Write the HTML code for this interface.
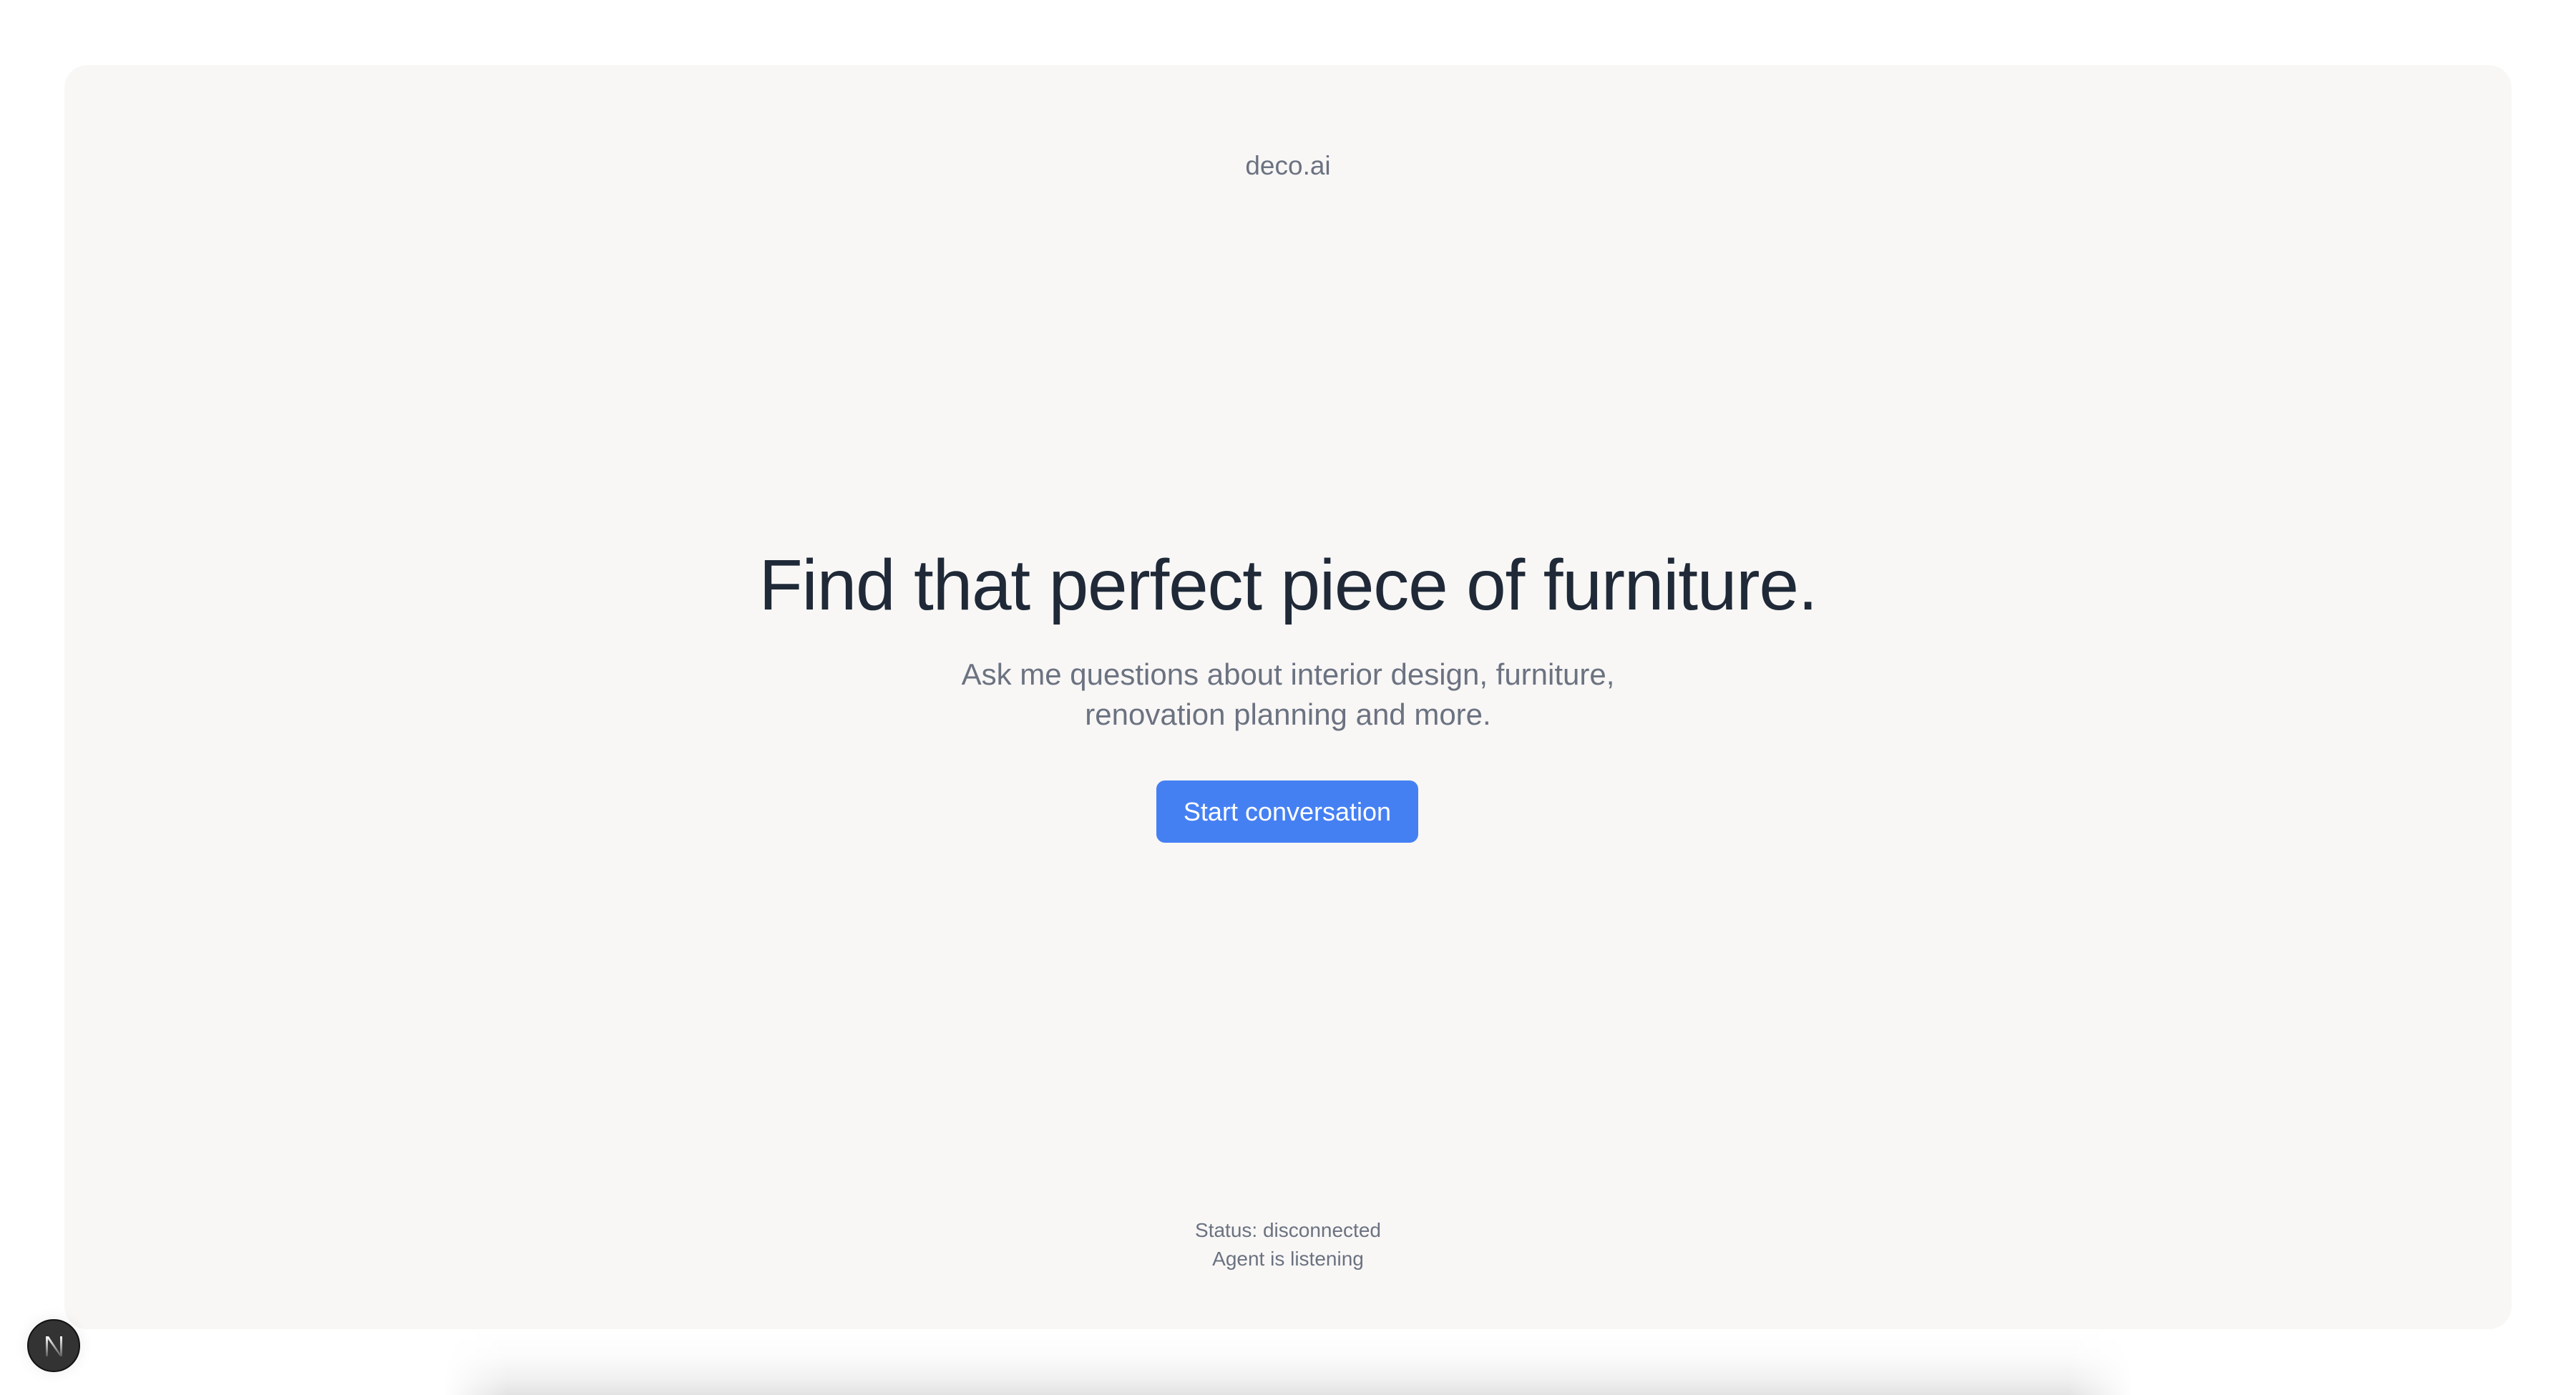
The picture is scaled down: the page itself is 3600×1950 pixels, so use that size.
<!DOCTYPE html>
<html><head><meta charset="utf-8"><style>
html,body{margin:0;padding:0;width:3600px;height:1950px;background:#fff;overflow:hidden;font-family:"Liberation Sans",sans-serif;}
.wrap{position:relative;width:3600px;height:1950px;overflow:hidden;}
.card{position:absolute;left:90px;top:91px;width:3420px;height:1767px;background:#f8f7f6;border-radius:32px;}
.c{position:absolute;left:0;width:3600px;text-align:center;}
.logo{top:211px;font-size:37px;color:#6b7280;}
h1{margin:0;top:758px;font-size:100px;font-weight:500;color:#1f2937;letter-spacing:-1.2px;line-height:120px;}
.sub{top:915px;font-size:42px;color:#6b7280;line-height:56px;}
.btn{position:absolute;left:1616px;top:1091px;width:366px;height:87px;background:#4580f3;border-radius:12px;color:#fff;font-size:36px;line-height:87px;text-align:center;}
.st{top:1700px;font-size:28px;color:#6b7280;line-height:40px;}
.badge{position:absolute;left:38px;top:1844px;width:74px;height:74px;border-radius:50%;background:#333;border:2px solid #111;box-sizing:border-box;box-shadow:0 0 20px rgba(0,0,0,0.08);}
.shadow{position:absolute;left:620px;top:1860px;width:2360px;height:90px;
background:linear-gradient(to bottom,rgba(0,0,0,0) 0%,rgba(0,0,0,0.015) 40%,rgba(0,0,0,0.06) 75%,rgba(0,0,0,0.11) 100%);
-webkit-mask-image:linear-gradient(to right,transparent 0,#000 90px,#000 2270px,transparent 2360px);
mask-image:linear-gradient(to right,transparent 0,#000 90px,#000 2270px,transparent 2360px);}
</style></head><body><div class="wrap">
<div class="card"></div>
<div class="c logo">deco.ai</div>
<h1 class="c">Find that perfect piece of furniture.</h1>
<div class="c sub">Ask me questions about interior design, furniture,<br>renovation planning and more.</div>
<div class="btn">Start conversation</div>
<div class="c st">Status: disconnected<br>Agent is listening</div>
<div class="shadow"></div>
<div class="badge"><svg width="70" height="70" viewBox="0 0 70 70" style="position:absolute;left:0;top:0">
<defs><linearGradient id="g" x1="0" y1="0" x2="0" y2="1"><stop offset="0" stop-color="#fff"/><stop offset="1" stop-color="#fff" stop-opacity="0.2"/></linearGradient></defs>
<path d="M24 22h4l16 24V22h3v28h-3L27 26v24h-3z" fill="url(#g)"/></svg></div>
</div></body></html>
